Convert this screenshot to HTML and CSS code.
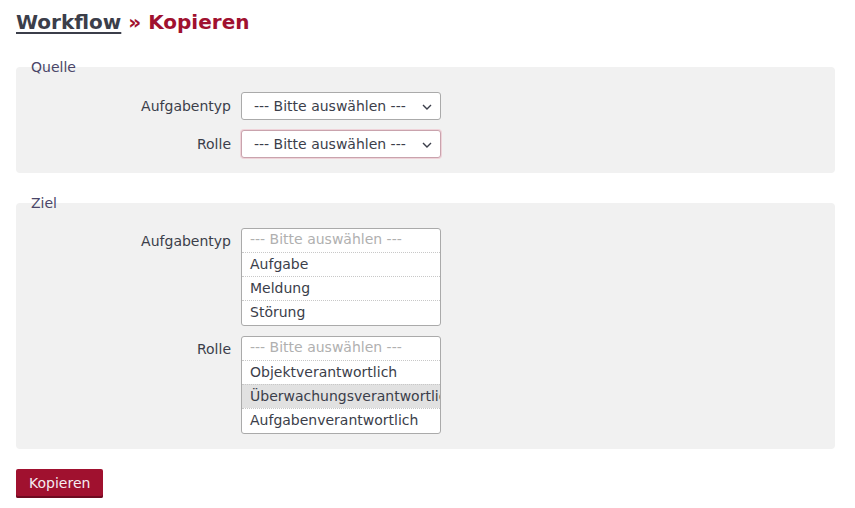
FILE: index.html
```html
<!DOCTYPE html>
<html lang="de">
<head>
<meta charset="utf-8">
<title>Workflow » Kopieren</title>
<link rel="stylesheet" href="styles.css">
</head>
<body>
<h1 class="title"><a class="title-link" href="#">Workflow</a> » Kopieren</h1>

<fieldset class="panel">
  <legend class="panel-legend">Quelle</legend>
  <div class="row">
    <label class="row-label">Aufgabentyp</label>
    <div class="select">
      <span class="select-text">--- Bitte auswählen ---</span>
      <svg class="chevron" width="10" height="6" viewBox="0 0 10 6"><path d="M1 1 L5 5 L9 1" fill="none" stroke="#3b3e4a" stroke-width="1.4"/></svg>
    </div>
  </div>
  <div class="row">
    <label class="row-label">Rolle</label>
    <div class="select select-focus">
      <span class="select-text">--- Bitte auswählen ---</span>
      <svg class="chevron" width="10" height="6" viewBox="0 0 10 6"><path d="M1 1 L5 5 L9 1" fill="none" stroke="#3b3e4a" stroke-width="1.4"/></svg>
    </div>
  </div>
</fieldset>

<fieldset class="panel panel-second">
  <legend class="panel-legend">Ziel</legend>
  <div class="row">
    <label class="row-label row-label-top">Aufgabentyp</label>
    <div class="listbox">
      <div class="option option-placeholder">--- Bitte auswählen ---</div>
      <div class="option">Aufgabe</div>
      <div class="option">Meldung</div>
      <div class="option">Störung</div>
    </div>
  </div>
  <div class="row">
    <label class="row-label row-label-top">Rolle</label>
    <div class="listbox">
      <div class="option option-placeholder">--- Bitte auswählen ---</div>
      <div class="option">Objektverantwortlich</div>
      <div class="option option-selected">Überwachungsverantwortlich</div>
      <div class="option">Aufgabenverantwortlich</div>
    </div>
  </div>
</fieldset>

<button class="button" type="button">Kopieren</button>
</body>
</html>
```

FILE: styles.css
```css
html, body {
  margin: 0;
  padding: 0;
  background: #ffffff;
}

body {
  padding: 0 20px 0 16px;
  font-family: "DejaVu Sans", Verdana, sans-serif;
  font-size: 14px;
  color: #3b3e4a;
}

.title {
  margin: 0;
  padding-top: 9px;
  font-size: 20px;
  line-height: 26px;
  font-weight: bold;
  color: #a0112f;
}

.title-link {
  color: #3b3e4a;
  text-decoration: underline;
  text-decoration-thickness: 2px;
  text-underline-offset: 3px;
}

.panel {
  margin: 24px 0 0 0;
  padding: 17px 0 15px 0;
  border: none;
  border-radius: 4px;
  background: #f1f1f1;
  display: flex;
  flex-direction: column;
  gap: 10px;
  min-width: 0;
}

.panel-second {
  margin-top: 22px;
}

.panel-legend {
  padding: 0;
  margin-left: 15px;
  font-size: 14px;
  line-height: 16px;
  color: #4a4668;
}

.row {
  display: grid;
  grid-template-columns: 215px 200px;
  column-gap: 10px;
  align-items: center;
}

.row-label {
  text-align: right;
  line-height: 16px;
}

.row-label-top {
  align-self: start;
  padding-top: 5px;
}

.select {
  box-sizing: border-box;
  height: 28px;
  border: 1px solid #aaaaaa;
  border-radius: 3px;
  background: #ffffff;
  display: flex;
  align-items: center;
  justify-content: space-between;
  padding: 0 8px 0 12px;
}

.select-focus {
  border-color: #c9a3ad;
  box-shadow: 0 0 0 1px #efd3d9;
}

.select-text {
  white-space: nowrap;
  line-height: 16px;
}

.chevron {
  display: block;
  margin-top: 2px;
}

.listbox {
  box-sizing: border-box;
  height: 98px;
  border: 1px solid #aaaaaa;
  border-radius: 3px;
  background: #ffffff;
  overflow: hidden;
}

.option {
  height: 24px;
  box-sizing: border-box;
  padding: 3px 0 0 8px;
  line-height: 17px;
  white-space: nowrap;
  border-top: 1px dotted #c8c8c8;
}

.option:first-child {
  border-top: none;
  height: 23px;
  padding-top: 2px;
}

.option-placeholder {
  color: #b0b0b0;
}

.option-selected {
  background: #e1e1e1;
}

.button {
  margin-top: 20px;
  height: 29px;
  padding: 0 13px 1px;
  border: none;
  border-radius: 2px;
  background: #a0112f;
  box-shadow: inset 0 -2px 0 #6e0a20;
  color: #f4ecf2;
  font-family: "DejaVu Sans", Verdana, sans-serif;
  font-size: 14px;
  line-height: 16px;
  cursor: pointer;
}
```
